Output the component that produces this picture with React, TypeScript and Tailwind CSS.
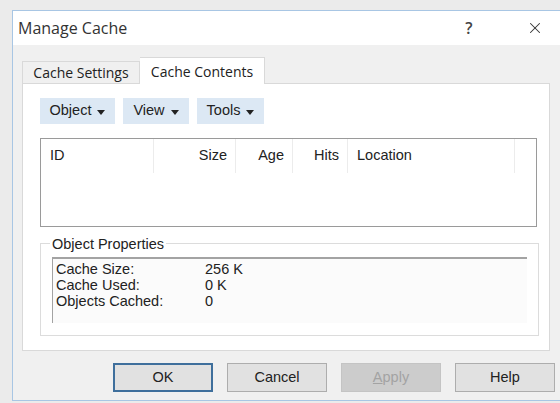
import { X } from 'lucide-react'

const uiFont = { fontFamily: '"Open Sans", "Noto Sans", sans-serif' }
const sysFont = { fontFamily: '"Liberation Sans", Arial, sans-serif' }

const menus = [
  { label: 'Object', w: 'w-[75px]' },
  { label: 'View', w: 'w-[66px]' },
  { label: 'Tools', w: 'w-[67px]' },
]

const columns = [
  { label: 'ID', w: 'w-[113px]', align: 'justify-start pl-[9px]' },
  { label: 'Size', w: 'w-[82px]', align: 'justify-end pr-[8px]' },
  { label: 'Age', w: 'w-[57px]', align: 'justify-end pr-[8px]' },
  { label: 'Hits', w: 'w-[55px]', align: 'justify-end pr-[8px]' },
  { label: 'Location', w: 'w-[167px]', align: 'justify-start pl-[9px]' },
]

const props = [
  ['Cache Size:', '256 K'],
  ['Cache Used:', '0 K'],
  ['Objects Cached:', '0'],
]

function Caret() {
  return (
    <svg width="8" height="5" viewBox="0 0 8 5" className="ml-[6px] mt-[2px]">
      <path d="M0 0h8L4 5z" fill="#222" />
    </svg>
  )
}

function DialogButton({ label, focused, disabled }: { label: string; focused?: boolean; disabled?: boolean }) {
  return (
    <button
      className={
        'w-[100px] h-[29px] flex items-center justify-center text-[14.5px] ' +
        (focused
          ? 'border-2 border-[#3f6f9c] bg-[#e1e1e1] text-[#222]'
          : disabled
          ? 'border border-[#c4c4c4] bg-[#cccccc] text-[#a3a3a3]'
          : 'border border-[#adadad] bg-[#e1e1e1] text-[#222]')
      }
      style={sysFont}
    >
      {disabled ? (
        <span>
          <span className="underline">A</span>pply
        </span>
      ) : (
        label
      )}
    </button>
  )
}

export default function App() {
  return (
    <div className="w-[560px] h-[403px] bg-[#ebebeb] pt-[10px] pl-[12px] overflow-hidden">
      <div className="w-[560px] h-[391px] bg-[#f0f0f0] border-l border-t border-b border-[#a8c6e4] flex flex-col">
        {/* title bar */}
        <div className="h-[34px] bg-white flex items-center shrink-0" style={uiFont}>
          <span className="pl-[5px] text-[16px] text-[#333]">Manage Cache</span>
          <span className="ml-[338px] text-[16px] font-semibold text-[#444]">?</span>
          <X className="ml-[53px] w-[18px] h-[18px] text-[#333]" strokeWidth={1.4} />
        </div>

        <div className="pl-[9px] pt-[11px]">
          {/* tabs */}
          <div className="flex items-end h-[27px]" style={uiFont}>
            <div className="w-[118px] h-[22px] border border-b-0 border-[#d9d9d9] bg-[#f0f0f0] flex items-center justify-center text-[14px] text-[#222]">
              Cache Settings
            </div>
            <div className="w-[125px] h-[27px] border border-b-0 border-l-0 border-[#d9d9d9] bg-white flex items-center justify-center text-[14px] text-[#222] relative top-px">
              Cache Contents
            </div>
          </div>

          {/* tab page */}
          <div className="w-[528px] h-[268px] bg-white border border-[#d9d9d9] pl-[17px] pt-[14px]" style={sysFont}>
            <div className="flex gap-[8px]">
              {menus.map((m) => (
                <div
                  key={m.label}
                  className={m.w + ' h-[26px] bg-[#dce8f4] flex items-center justify-center text-[14.5px] text-[#222]'}
                >
                  {m.label}
                  <Caret />
                </div>
              ))}
            </div>

            {/* list view */}
            <div className="mt-[14px] w-[497px] h-[89px] border border-[#9a9a9a] bg-white">
              <div className="flex h-[34px]">
                {columns.map((c) => (
                  <div
                    key={c.label}
                    className={c.w + ' ' + c.align + ' flex items-center border-r border-[#ececec] text-[14.5px] text-[#222]'}
                  >
                    {c.label}
                  </div>
                ))}
              </div>
            </div>

            {/* group box */}
            <div className="mt-[16px] w-[499px] h-[93px] border border-[#dcdcdc] relative pl-[11px] pt-[13px]">
              <span className="absolute -top-[10px] left-[9px] bg-white px-[2px] text-[14.5px] text-[#222]">
                Object Properties
              </span>
              <div className="w-[475px] h-[66px] border-t-2 border-l border-[#a3a3a3] bg-[#fbfbfb] pl-[3px] pt-[2px]">
                {props.map(([k, v]) => (
                  <div key={k} className="flex h-[16px] items-center text-[14.5px] text-[#222] leading-none">
                    <span className="w-[149px]">{k}</span>
                    <span>{v}</span>
                  </div>
                ))}
              </div>
            </div>
          </div>

          {/* dialog buttons */}
          <div className="flex gap-[14px] pl-[91px] pt-[12px]">
            <DialogButton label="OK" focused />
            <DialogButton label="Cancel" />
            <DialogButton label="Apply" disabled />
            <DialogButton label="Help" />
          </div>
        </div>
      </div>
    </div>
  )
}
